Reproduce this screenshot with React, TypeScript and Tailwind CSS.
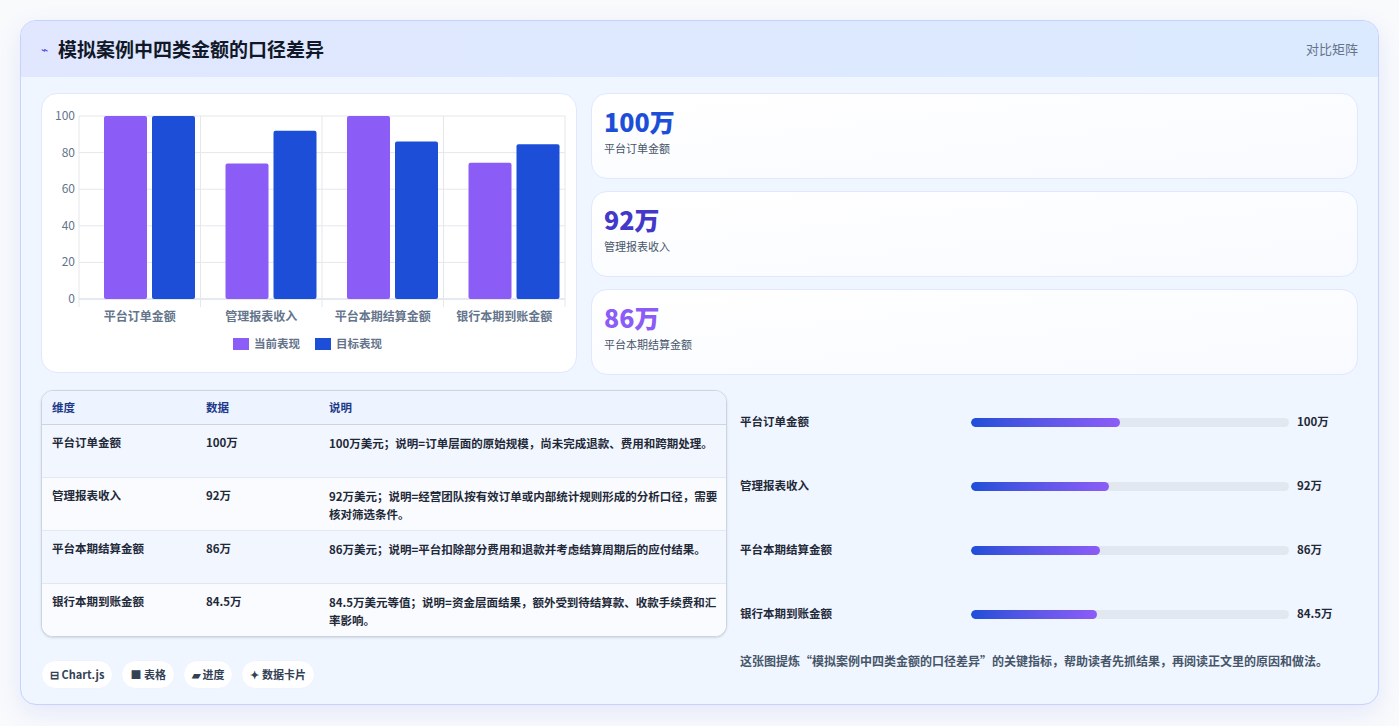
const font = { fontFamily: '"Noto Sans CJK SC", "Noto Sans", sans-serif' }

const cats = ["平台订单金额", "管理报表收入", "平台本期结算金额", "银行本期到账金额"]
const current = [100, 74, 100, 74.5]
const target = [100, 92, 86, 84.5]

const stats = [
  { value: "100万", label: "平台订单金额", color: "text-[#1d4ed8]" },
  { value: "92万", label: "管理报表收入", color: "text-[#4338ca]" },
  { value: "86万", label: "平台本期结算金额", color: "text-[#8b5cf6]" },
]

const rows = [
  { dim: "平台订单金额", data: "100万", note: "100万美元；说明=订单层面的原始规模，尚未完成退款、费用和跨期处理。" },
  { dim: "管理报表收入", data: "92万", note: "92万美元；说明=经营团队按有效订单或内部统计规则形成的分析口径，需要核对筛选条件。" },
  { dim: "平台本期结算金额", data: "86万", note: "86万美元；说明=平台扣除部分费用和退款并考虑结算周期后的应付结果。" },
  { dim: "银行本期到账金额", data: "84.5万", note: "84.5万美元等值；说明=资金层面结果，额外受到待结算款、收款手续费和汇率影响。" },
]

const progress = [
  { label: "平台订单金额", value: "100万", pct: 47 },
  { label: "管理报表收入", value: "92万", pct: 43.5 },
  { label: "平台本期结算金额", value: "86万", pct: 40.5 },
  { label: "银行本期到账金额", value: "84.5万", pct: 39.5 },
]

function Chart() {
  // plot area in svg coords: x 37..523, y 22..205
  const x0 = 37
  const w = 486
  const top = 22
  const bottom = 205
  const h = bottom - top
  const band = w / 4
  const yFor = (v: number) => bottom - (v / 100) * h
  return (
    <svg width="535" height="279" viewBox="0 0 535 279" style={font}>
      {[0, 20, 40, 60, 80, 100].map((t) => (
        <g key={t}>
          <line x1={x0} x2={x0 + w} y1={yFor(t)} y2={yFor(t)} stroke={t === 0 ? "#cbd5e1" : "#e5e7eb"} strokeWidth="1" />
          <text x={x0 - 4} y={yFor(t) + 4} textAnchor="end" fontSize="12" fill="#64748b">{t}</text>
        </g>
      ))}
      {[0, 1, 2, 3, 4].map((i) => (
        <line key={i} x1={x0 + i * band} x2={x0 + i * band} y1={top} y2={bottom + 8} stroke="#e5e7eb" />
      ))}
      {cats.map((c, i) => {
        const bx = x0 + i * band
        return (
          <g key={c}>
            <rect x={bx + 25} y={yFor(current[i])} width="43" height={bottom - yFor(current[i])} rx="2" fill="#8b5cf6" />
            <rect x={bx + 73} y={yFor(target[i])} width="43" height={bottom - yFor(target[i])} rx="2" fill="#1d4ed8" />
            <text x={bx + band / 2} y={227} textAnchor="middle" fontSize="12" fontWeight="600" fill="#64748b">{c}</text>
          </g>
        )
      })}
      <rect x="191" y="244" width="16" height="12" fill="#8b5cf6" />
      <text x="212" y="254" fontSize="11.5" fill="#64748b" fontWeight="600">当前表现</text>
      <rect x="273" y="244" width="16" height="12" fill="#1d4ed8" />
      <text x="294" y="254" fontSize="11.5" fill="#64748b" fontWeight="600">目标表现</text>
    </svg>
  )
}

export default function App() {
  return (
    <div className="min-h-screen bg-[#f8fafc] p-5" style={font}>
      <div className="w-[1359px] h-[685px] rounded-2xl border border-[#c7d2fe] bg-[#eff6ff] overflow-hidden shadow-[0_8px_24px_rgba(99,102,241,0.12)]">
        <div className="h-[56px] flex items-center justify-between px-5 bg-gradient-to-r from-[#e0e7ff] to-[#dbeafe]">
          <div className="flex items-center gap-2.5">
            <span className="text-[#4f46e5] text-xs">⌁</span>
            <h1 className="text-[19px] font-bold text-[#111827]">模拟案例中四类金额的口径差异</h1>
          </div>
          <span className="text-[13px] text-[#64748b]">对比矩阵</span>
        </div>

        <div className="px-5 pt-4">
          <div className="flex gap-[14px]">
            <div className="w-[536px] h-[280px] rounded-2xl bg-white border border-[#e0e7ff]">
              <Chart />
            </div>
            <div className="flex-1 flex flex-col gap-3">
              {stats.map((s) => (
                <div key={s.label} className="h-[86px] rounded-2xl border border-[#e0e7ff] bg-gradient-to-br from-white to-[#f8faff] px-3 pt-2.5">
                  <div className={`text-[25px] font-extrabold leading-[34px] ${s.color}`}>{s.value}</div>
                  <div className="text-[11px] text-[#475569] mt-0.5">{s.label}</div>
                </div>
              ))}
            </div>
          </div>

          <div className="flex gap-[13px] mt-[15px]">
            <div className="w-[686px]">
              <div className="rounded-xl border border-[#cbd5e1] overflow-hidden bg-white shadow-sm">
                <table className="w-full text-[11.5px] border-collapse">
                  <thead>
                    <tr className="bg-[#eef4ff] text-[#1e3a8a] font-bold h-[33px] border-b border-[#cbd5e1]">
                      <th className="text-left pl-2.5 w-[164px] font-bold">维度</th>
                      <th className="text-left w-[123px] font-bold">数据</th>
                      <th className="text-left font-bold">说明</th>
                    </tr>
                  </thead>
                  <tbody>
                    {rows.map((r, i) => (
                      <tr key={r.dim} className={`${i % 2 === 0 ? "bg-[#f1f6ff]" : "bg-[#f9fbff]"} ${i < 3 ? "border-b border-[#e2e8f0]" : ""} align-top text-[#1f2937] font-semibold`}>
                        <td className="pl-2.5 pt-[9px] h-[53px]">{r.dim}</td>
                        <td className="pt-[9px]">{r.data}</td>
                        <td className="pt-[9px] pr-2 leading-[18px]">{r.note}</td>
                      </tr>
                    ))}
                  </tbody>
                </table>
              </div>
              <div className="flex gap-2 mt-[23px]">
                {["⊟ Chart.js", "■ 表格", "▰ 进度", "✦ 数据卡片"].map((c) => (
                  <span key={c} className="h-[29px] px-2 flex items-center rounded-full bg-white border border-[#eef2ff] text-[11px] font-semibold text-[#334155]">{c}</span>
                ))}
              </div>
            </div>

            <div className="flex-1 flex flex-col">
              <div className="flex flex-col">
                {progress.map((p) => (
                  <div key={p.label} className="h-[64px] flex items-center">
                    <span className="w-[231px] text-[11.5px] font-semibold text-[#1f2937]">{p.label}</span>
                    <div className="w-[318px] h-[9px] rounded-full bg-[#e2e8f0] overflow-hidden">
                      <div className="h-full rounded-full bg-gradient-to-r from-[#1d4ed8] to-[#8b5cf6]" style={{ width: `${p.pct}%` }} />
                    </div>
                    <span className="ml-2 text-[11.5px] font-bold text-[#1f2937]">{p.value}</span>
                  </div>
                ))}
              </div>
              <p className="mt-[5px] text-[12px] leading-[19px] text-[#475569] font-semibold pr-4">
                这张图提炼“模拟案例中四类金额的口径差异”的关键指标，帮助读者先抓结果，再阅读正文里的原因和做法。
              </p>
            </div>
          </div>
        </div>
      </div>
    </div>
  )
}
